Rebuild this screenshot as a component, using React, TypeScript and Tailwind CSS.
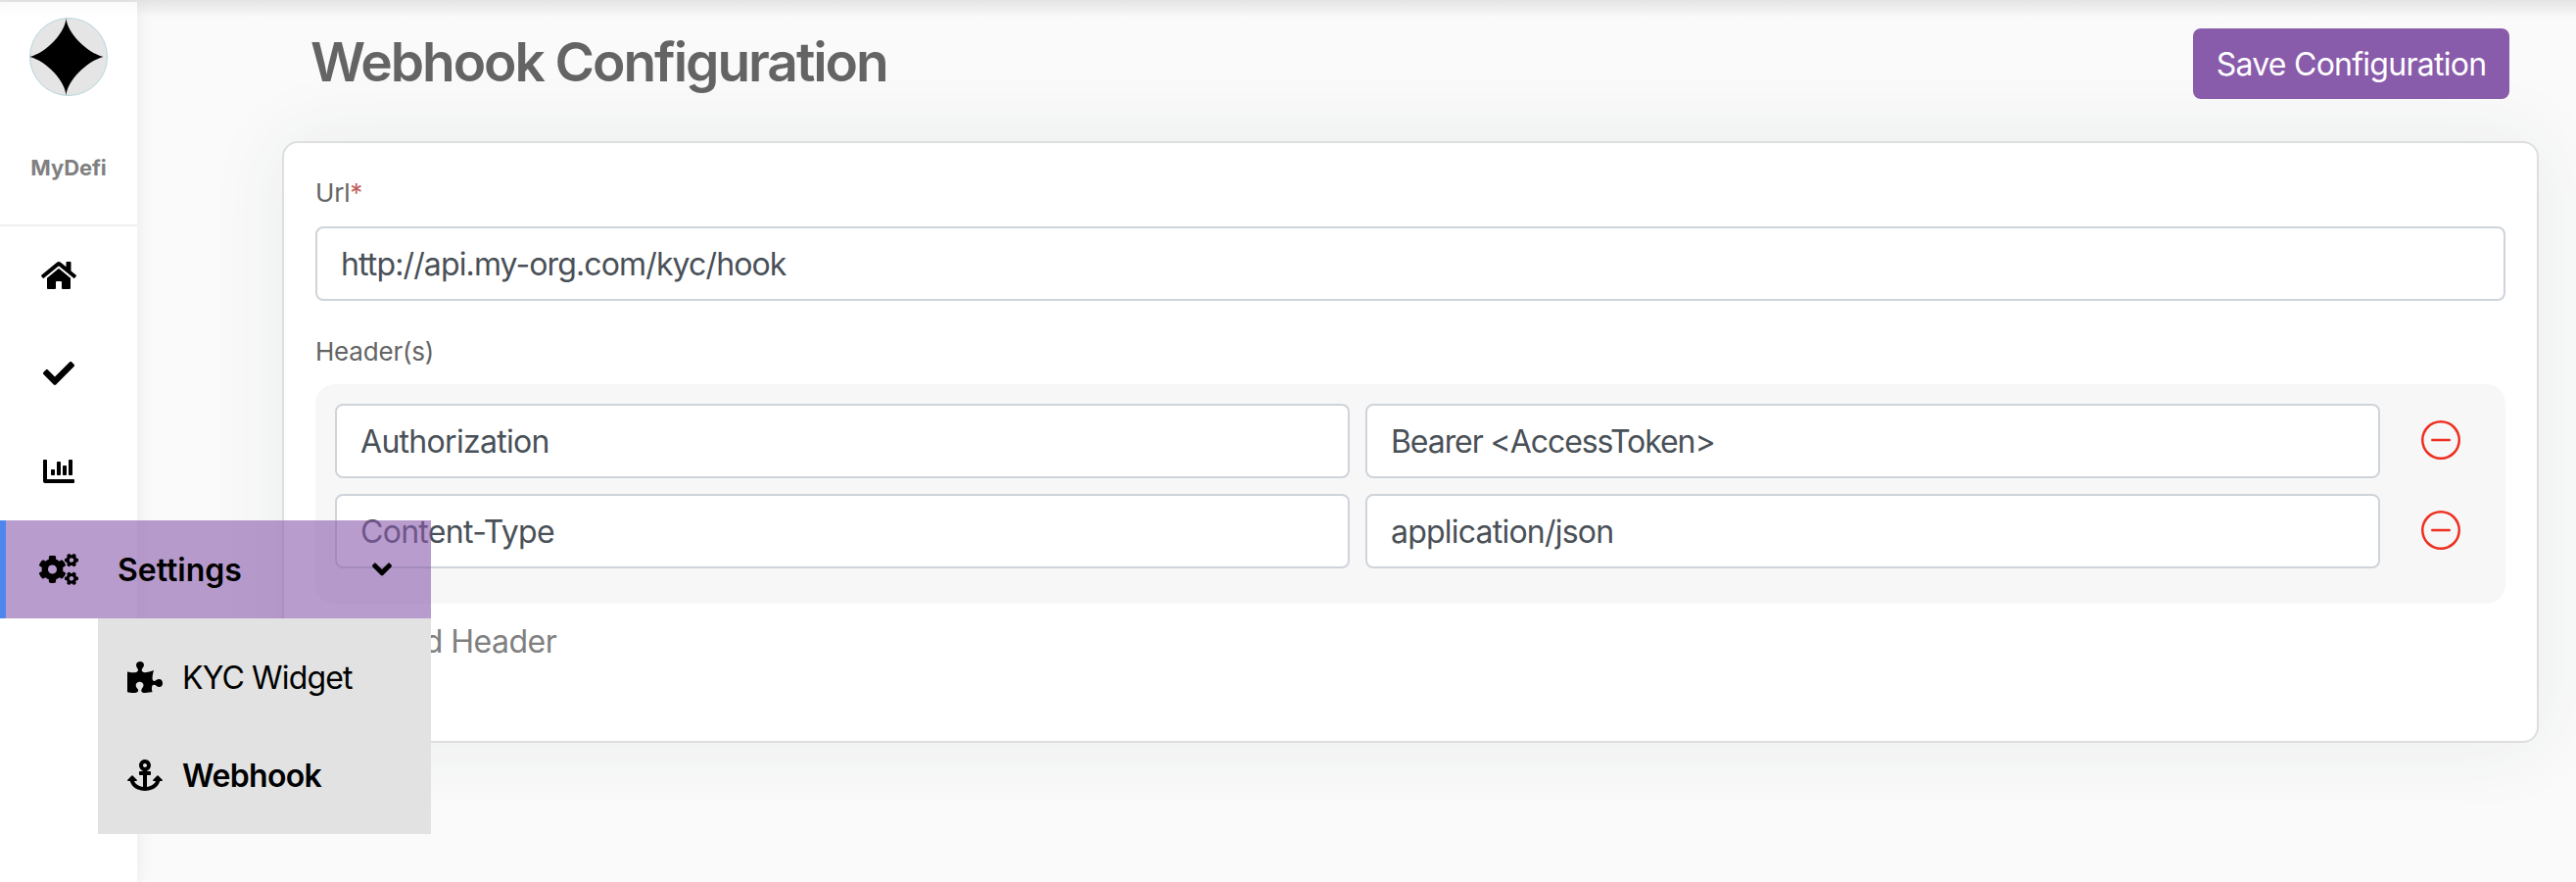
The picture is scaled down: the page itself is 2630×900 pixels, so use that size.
import type { ReactNode } from "react";
import { FaAnchor, FaAngleDown, FaChartBar, FaCheck, FaCogs, FaHome, FaPuzzlePiece } from "react-icons/fa";
import { BsDashCircle } from "react-icons/bs";

function NavItem({ children }: { children: ReactNode }) {
  return <a className="flex h-[100px] w-[120px] items-center justify-center text-black">{children}</a>;
}

function Field({ value, className = "" }: { value: string; className?: string }) {
  return (
    <input
      readOnly
      value={value}
      className={`block h-[76px] w-full min-w-0 rounded-lg border-2 border-[#ced4da] bg-white px-6 text-[32px] font-[430] text-[#495057] outline-none ${className}`}
    />
  );
}

function HeaderRow({ name, value, nameClass, valueClass }: { name: string; value: string; nameClass: string; valueClass: string }) {
  return (
    <div className="flex h-[76px] items-center">
      <div className="grid flex-1 grid-cols-2 gap-4">
        <Field value={name} className={nameClass} />
        <Field value={value} className={valueClass} />
      </div>
      <BsDashCircle className="mr-[26px] mb-0.5 ml-[42px] size-10 shrink-0 text-[#ee2f21]" />
    </div>
  );
}

function Logo() {
  return (
    <svg viewBox="0 0 80 80" className="size-20 shrink-0">
      <circle cx="40" cy="40" r="39.5" fill="#e5e5e5" stroke="#b5d6de" strokeWidth="1" />
      <path d="M37.5 0.5C38.5 15 58 35.5 75.5 40C58 44.5 38.5 65 37.5 79.5C36.5 65 18 44.5 0.5 40C18 35.5 36.5 15 37.5 0.5Z" fill="#000" />
    </svg>
  );
}

export default function App() {
  return (
    <div className="relative flex h-[900px] w-[2630px] overflow-hidden bg-[#fafafa] font-['Inter',sans-serif]">
      <div className="absolute inset-x-0 top-0 h-[18px] bg-linear-to-b from-black/9 to-transparent" />

      <aside className="relative z-10 mt-0.5 flex h-[898px] w-[140px] shrink-0 flex-col bg-white bg-linear-to-b from-[#fafafa] to-white to-[16px] shadow-[0_4px_18px_rgba(0,0,0,0.07)]">
        <div className="flex h-[229px] shrink-0 flex-col items-center border-b-2 border-[#efefef] pt-4">
          <Logo />
          <span className="mt-[58px] text-[22px] leading-[30px] font-bold tracking-[-0.1px] text-[#808080]">MyDefi</span>
        </div>
        <NavItem>
          <FaHome size={36} />
        </NavItem>
        <NavItem>
          <FaCheck size={32} />
        </NavItem>
        <NavItem>
          <FaChartBar size={32} />
        </NavItem>
        <div className="flex h-[100px] w-[440px] shrink-0 items-center border-l-[6px] border-[#4f86ed] bg-[#885aab]/60 bg-clip-padding pr-10 pl-[34px]">
          <FaCogs size={40} className="shrink-0" />
          <span className="ml-10 flex-1 pt-0.5 text-[32px] font-semibold text-black">Settings</span>
          <FaAngleDown className="h-8 w-5" />
        </div>
        <div className="ml-[100px] flex h-[220px] w-[340px] shrink-0 flex-col bg-[#e2e2e2] py-2.5 text-[32px] text-black">
          <a className="flex h-[100px] items-center gap-5 pl-[30px]">
            <FaPuzzlePiece size={36} />
            <span className="pt-0.5 tracking-[-0.85px]">KYC Widget</span>
          </a>
          <a className="flex h-[100px] items-center gap-5 pl-[30px] font-semibold">
            <FaAnchor size={36} />
            <span className="pt-0.5 tracking-[-0.65px]">Webhook</span>
          </a>
        </div>
      </aside>

      <main className="flex flex-1 flex-col pr-[38px] pl-[148px]">
        <header className="flex h-36 items-start justify-between pr-[30px] pl-[29px]">
          <h1 className="mt-7 text-[55px] leading-[70px] font-[560] tracking-[-2.05px] text-[#646464]">Webhook Configuration</h1>
          <button className="relative z-10 mt-[29px] h-[72px] w-[323px] rounded-lg bg-[#895bab] pt-0.5 text-[32px] font-[430] tracking-[-0.74px] text-white">
            Save Configuration
          </button>
        </header>

        <section className="flex h-[614px] flex-col rounded-2xl border-2 border-[#dedede] bg-white px-8 shadow-[0_0_80px_rgba(40,60,70,0.08)]">
          <label className="mt-[31px] h-[54px] text-[26px] leading-10 tracking-[-0.2px] text-[#646464]">
            Url<span className="text-[#c25f5c]">*</span>
          </label>
          <Field value="http://api.my-org.com/kyc/hook" className="tracking-[-0.87px]" />
          <label className="mt-8 h-[53px] text-[26px] leading-10 tracking-[-0.2px] text-[#646464]">Header(s)</label>
          <div className="flex h-56 flex-col gap-4 rounded-[20px] bg-[#f7f7f7] p-5">
            <HeaderRow name="Authorization" value="Bearer <AccessToken>" nameClass="tracking-[-0.7px]" valueClass="tracking-[-1.07px]" />
            <HeaderRow name="Content-Type" value="application/json" nameClass="tracking-[-0.7px]" valueClass="tracking-[-0.78px]" />
          </div>
          <button className="mt-[19px] self-start pl-[70px] text-[32px] leading-10 tracking-[-0.5px] text-[#808080]">Add Header</button>
        </section>
      </main>
    </div>
  );
}
